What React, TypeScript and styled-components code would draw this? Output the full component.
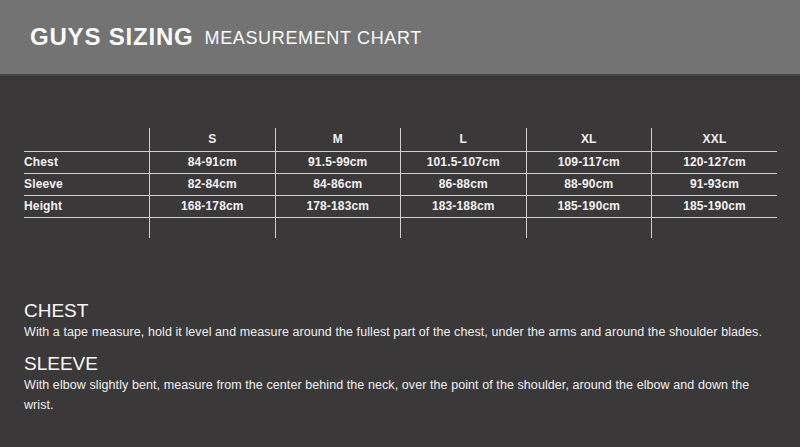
import React from 'react'
import styled, { createGlobalStyle } from 'styled-components'

const GlobalStyle = createGlobalStyle`
  html, body {
    margin: 0;
    padding: 0;
    background: #3a3839;
  }
  body {
    font-family: 'Liberation Sans', Helvetica, Arial, sans-serif;
    color: #f4f4f4;
  }
`

const Page = styled.div`
  width: 800px;
  height: 447px;
  background: #3a3839;
  overflow: hidden;
`

const Header = styled.header`
  height: 74px;
  display: flex;
  align-items: center;
  gap: 11px;
  padding: 0 0 0 30px;
  background: #737373;
  border-bottom: 2px solid #484748;
`

const Title = styled.h1`
  margin: 0;
  font-size: 24px;
  font-weight: 700;
  letter-spacing: 0.8px;
  color: #fafafa;
`

const Subtitle = styled.span`
  font-size: 18px;
  letter-spacing: 0.65px;
  color: #fafafa;
  padding-top: 2px;
`

const Body = styled.main`
  padding: 52px 23px 0 24px;
`

const Chart = styled.table`
  width: 753px;
  border-collapse: collapse;
  table-layout: fixed;
  font-size: 12px;
  font-weight: 700;
  letter-spacing: 0.15px;
`

const Row = styled.tr<{ $height: number; $ruled?: boolean }>`
  height: ${(p) => p.$height}px;
  border-bottom: ${(p) => (p.$ruled ? '1px solid #cfcfcf' : 'none')};
`

const Cell = styled.td<{ $label?: boolean }>`
  padding: 0;
  text-align: ${(p) => (p.$label ? 'left' : 'center')};
  border-left: ${(p) => (p.$label ? 'none' : '1px solid #cfcfcf')};
  color: #f2f2f2;
  vertical-align: middle;
`

const Guide = styled.section`
  margin-top: 62px;
  width: 753px;
`

const GuideTitle = styled.h2<{ $gap?: number }>`
  margin: ${(p) => p.$gap ?? 0}px 0 0;
  font-size: 19px;
  font-weight: 400;
  line-height: 22px;
  color: #fafafa;
`

const GuideText = styled.p`
  margin: 0;
  font-size: 12.5px;
  letter-spacing: 0.08px;
  line-height: 20.5px;
  color: #f0f0f0;
`

const sizes = ['S', 'M', 'L', 'XL', 'XXL']

const rows = [
  { label: 'Chest', values: ['84-91cm', '91.5-99cm', '101.5-107cm', '109-117cm', '120-127cm'] },
  { label: 'Sleeve', values: ['82-84cm', '84-86cm', '86-88cm', '88-90cm', '91-93cm'] },
  { label: 'Height', values: ['168-178cm', '178-183cm', '183-188cm', '185-190cm', '185-190cm'] }
]

const App: React.FC = () => {
  return (
    <Page>
      <GlobalStyle />
      <Header>
        <Title>GUYS SIZING</Title>
        <Subtitle>MEASUREMENT CHART</Subtitle>
      </Header>
      <Body>
        <Chart>
          <tbody>
            <Row $height={23} $ruled>
              <Cell $label />
              {sizes.map((size) => (
                <Cell key={size}>{size}</Cell>
              ))}
            </Row>
            {rows.map((row) => (
              <Row key={row.label} $height={22} $ruled>
                <Cell $label>{row.label}</Cell>
                {row.values.map((value, i) => (
                  <Cell key={i}>{value}</Cell>
                ))}
              </Row>
            ))}
            <Row $height={21}>
              <Cell $label />
              {sizes.map((size) => (
                <Cell key={size} />
              ))}
            </Row>
          </tbody>
        </Chart>
        <Guide>
          <GuideTitle>CHEST</GuideTitle>
          <GuideText>
            With a tape measure, hold it level and measure around the fullest part of the chest, under the arms and
            around the shoulder blades.
          </GuideText>
          <GuideTitle $gap={10}>SLEEVE</GuideTitle>
          <GuideText>
            With elbow slightly bent, measure from the center behind the neck, over the point of the shoulder, around
            the elbow and down the wrist.
          </GuideText>
        </Guide>
      </Body>
    </Page>
  )
}

export default App
